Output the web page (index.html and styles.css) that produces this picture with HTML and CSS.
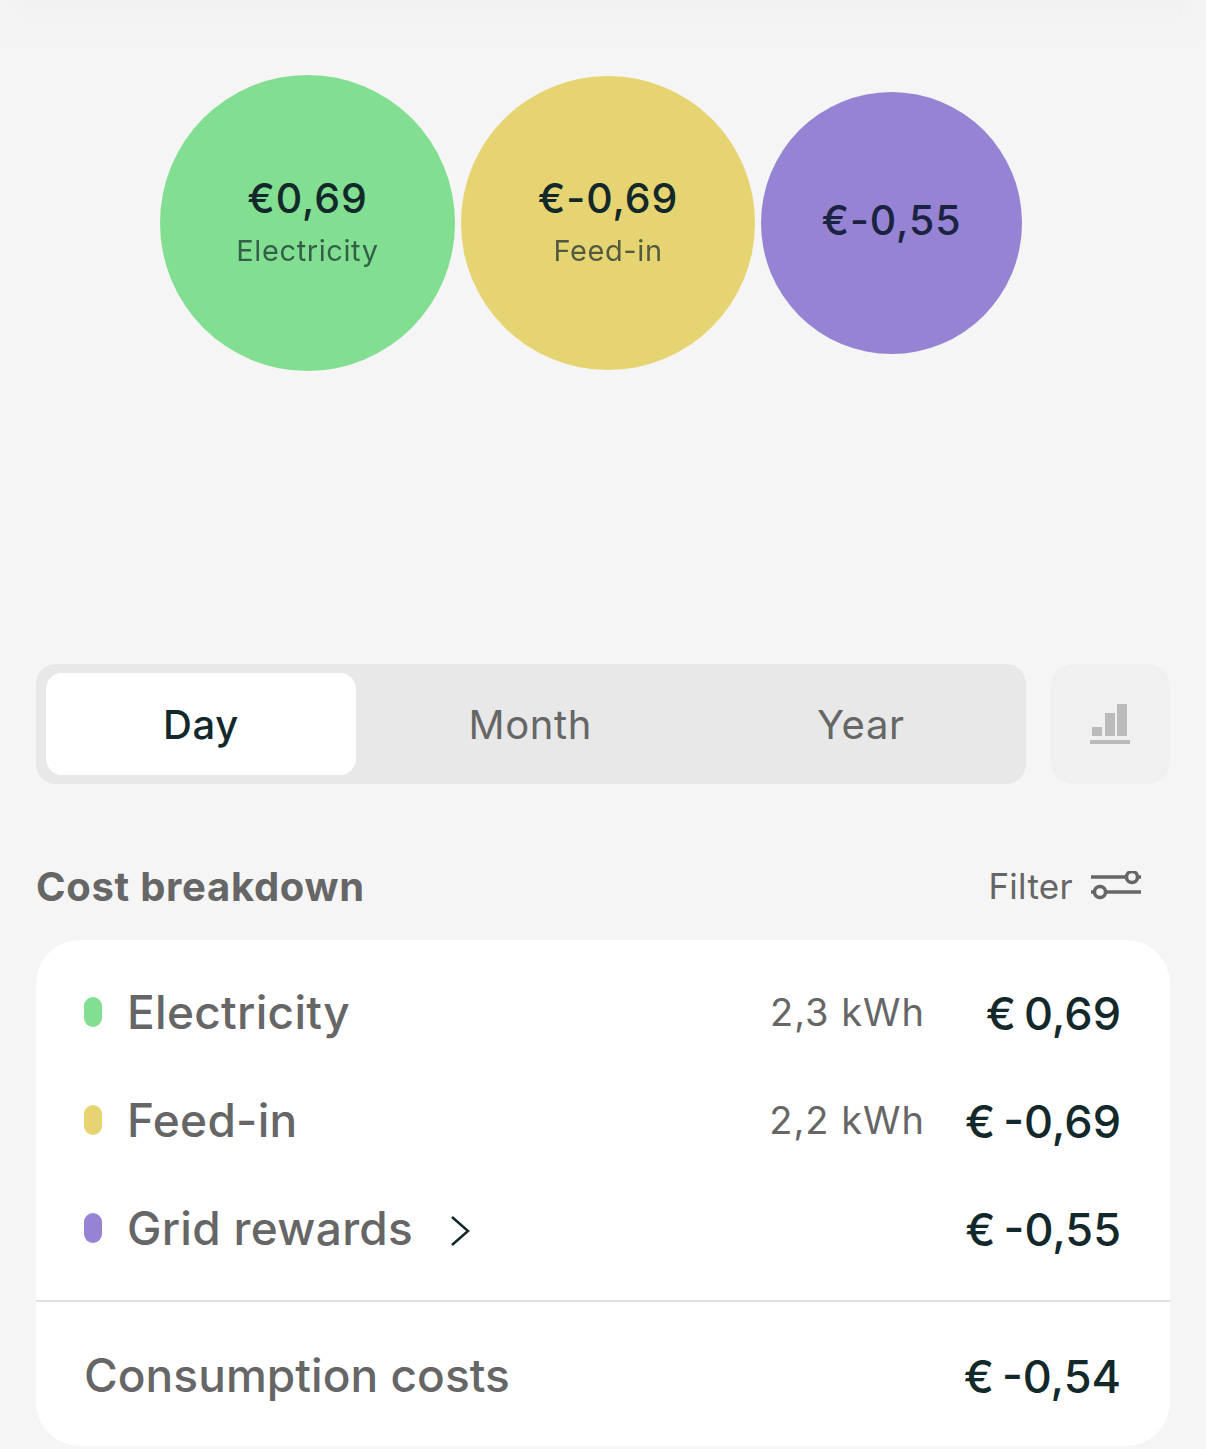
FILE: index.html
```html
<!DOCTYPE html>
<html>
<head>
<title>Costs</title>
<link rel="stylesheet" href="styles.css">
</head>
<body>

<div id="container">
  <div class="top-fade"></div>

  <div class="bubbles">
    <div class="bubble bubble-green">
      <div class="bubble-value">€0,69</div>
      <div class="bubble-label">Electricity</div>
    </div>
    <div class="bubble bubble-yellow">
      <div class="bubble-value">€-0,69</div>
      <div class="bubble-label">Feed-in</div>
    </div>
    <div class="bubble bubble-purple">
      <div class="bubble-value">€-0,55</div>
    </div>
  </div>

  <div class="controls">
    <div class="tabs">
      <div class="tab tab-active">Day</div>
      <div class="tab">Month</div>
      <div class="tab">Year</div>
    </div>
    <div class="chart-button">
      <svg width="40" height="42" viewBox="0 0 40 42" fill="#bbb">
        <rect x="2" y="24" width="10" height="9"/>
        <rect x="15" y="10" width="10" height="23"/>
        <rect x="27" y="1" width="10" height="32"/>
        <rect x="0" y="37" width="40" height="4"/>
      </svg>
    </div>
  </div>

  <div class="section-head">
    <h2>Cost breakdown</h2>
    <div class="filter">
      Filter
      <svg width="52" height="30" viewBox="0 0 52 30" fill="none" stroke="#666" stroke-width="3.5">
        <path d="M2 6H37M49 6H52M17 21H52M2 21H5"/>
        <circle cx="43" cy="6" r="5.5"/>
        <circle cx="11" cy="21" r="5.5"/>
      </svg>
    </div>
  </div>

  <div class="card">
    <div class="rows">
      <div class="row">
        <span class="dot dot-green"></span>
        <span class="row-name">Electricity</span>
        <span class="row-kwh">2,3 kWh</span>
        <span class="row-cost">€ 0,69</span>
      </div>
      <div class="row">
        <span class="dot dot-yellow"></span>
        <span class="row-name">Feed-in</span>
        <span class="row-kwh">2,2 kWh</span>
        <span class="row-cost">€ -0,69</span>
      </div>
      <div class="row">
        <span class="dot dot-purple"></span>
        <span class="row-name">Grid rewards</span>
        <svg class="chevron" width="20" height="32" viewBox="0 0 20 32" fill="none" stroke="#12282a" stroke-width="2.5">
          <path d="M2 2L18 16L2 30"/>
        </svg>
        <span class="row-cost">€ -0,55</span>
      </div>
    </div>
    <div class="total">
      <span class="row-name">Consumption costs</span>
      <span class="row-cost">€ -0,54</span>
    </div>
  </div>
</div>

</body>
</html>
```

FILE: styles.css
```css
body {
  font-family: 'Inter', 'Liberation Sans', sans-serif;
  background-color: #f5f5f5;
  margin: 0;
  overflow: hidden;
}

#container {
  width: 1206px;
  height: 1449px;
  overflow: hidden;
}

.top-fade {
  height: 44px;
  margin: -8px 12px -36px;
  background: linear-gradient(180deg, #f0f0f0, #f5f5f5);
  filter: blur(8px);
}

.bubbles {
  display: flex;
  align-items: center;
  gap: 6px;
  height: 296px;
  padding: 75px 0 0 160px;
}

.bubble {
  flex-shrink: 0;
  display: flex;
  flex-direction: column;
  align-items: center;
  justify-content: center;
  border-radius: 50%;
  color: #12282a;
}

.bubble-green {
  width: 295px;
  height: 296px;
  background-color: #82de90;
}

.bubble-yellow {
  width: 294px;
  height: 294px;
  background-color: #e6d371;
}

.bubble-purple {
  width: 261px;
  height: 262px;
  background-color: #9683d4;
  color: #1a2340;
}

.bubble-value {
  font-size: 41px;
  font-weight: 500;
  line-height: 48px;
  letter-spacing: 0.9px;
  margin-top: 1px;
}

.bubble-purple .bubble-value {
  margin-top: -7px;
}

.bubble-label {
  font-size: 29px;
  line-height: 36px;
  letter-spacing: 0.6px;
  margin-top: 11px;
  margin-bottom: 5px;
  opacity: 0.7;
}

.controls {
  display: flex;
  gap: 24px;
  margin: 293px 36px 0;
}

.tabs {
  flex: 1;
  display: flex;
  height: 120px;
  box-sizing: border-box;
  padding: 9px 0 9px 10px;
  background-color: #e8e8e8;
  border-radius: 20px;
}

.tab {
  flex: 1;
  display: flex;
  align-items: center;
  justify-content: center;
  font-size: 40px;
  letter-spacing: 0.6px;
  color: #666;
  border-radius: 16px;
}

.tab-active {
  flex: 0 0 310px;
  margin-right: 9px;
  background-color: #fff;
  color: #12282a;
  font-weight: 500;
}

.chart-button {
  width: 120px;
  height: 120px;
  display: flex;
  align-items: center;
  justify-content: center;
  background-color: #f0f0f0;
  border-radius: 24px;
}

.section-head {
  display: flex;
  align-items: center;
  justify-content: space-between;
  height: 48px;
  margin: 78px 65px 0 36px;
}

h2 {
  margin: 0;
  font-size: 40px;
  font-weight: 700;
  letter-spacing: 0.7px;
  color: #666;
}

.filter {
  display: flex;
  align-items: center;
  gap: 16px;
  font-size: 35px;
  letter-spacing: 0.3px;
  color: #666;
}

.card {
  margin: 30px 36px 0;
  height: 506px;
  background-color: #fff;
  border-radius: 44px;
}

.rows {
  padding: 18px 49px 18px 48px;
  border-bottom: 2px solid #e0e0e0;
}

.row {
  display: flex;
  align-items: center;
  height: 108px;
}

.dot {
  width: 18px;
  height: 30px;
  border-radius: 9px;
  margin-right: 25px;
}

.dot-green { background-color: #82de90; }
.dot-yellow { background-color: #e6d371; }
.dot-purple { background-color: #9683d4; }

.row-name {
  font-size: 46px;
  font-weight: 450;
  letter-spacing: 0.3px;
  color: #666;
}

.row-kwh {
  margin-left: auto;
  font-size: 38px;
  letter-spacing: 1px;
  color: #666;
}

.row-cost {
  width: 196px;
  margin-top: 2px;
  text-align: right;
  font-size: 45px;
  font-weight: 500;
  word-spacing: -4px;
  color: #12282a;
}

.chevron {
  margin-left: 37px;
  margin-right: auto;
  margin-top: 6px;
}

.total {
  display: flex;
  align-items: center;
  justify-content: space-between;
  height: 148px;
  padding: 0 49px 0 48px;
}

.total .row-name {
  margin-top: -2px;
  letter-spacing: 0.05px;
}

.total .row-cost {
  margin-top: 0;
}
```
